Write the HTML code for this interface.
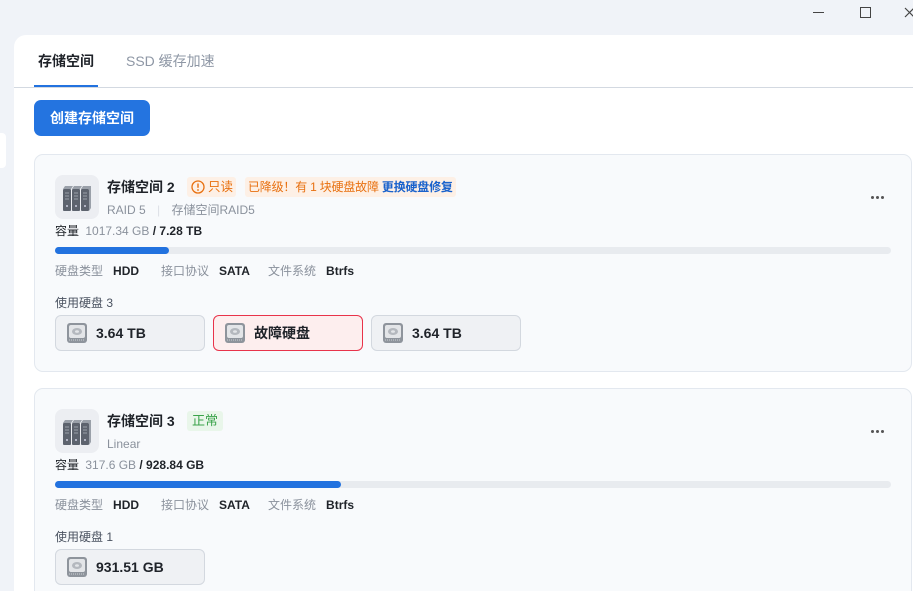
<!DOCTYPE html>
<html><head><meta charset="utf-8"><style>
*{margin:0;padding:0;box-sizing:border-box}
html,body{width:913px;height:591px;overflow:hidden}
body{background:#f0f3f8;font-family:"Liberation Sans","Noto Sans CJK SC",sans-serif;position:relative;color:#1f2329}
.abs{position:absolute}
.panel{left:14px;top:35px;width:899px;height:556px;background:#fff;border-radius:12px 0 0 0;overflow:hidden}
.tab{top:52px;font-size:14px;line-height:18px}
.card{left:34px;width:878px;background:#f8fafc;border:1px solid #e3e8ef;border-radius:9px}
.ico{width:44px;height:44px;background:#eceef2;border-radius:8px}
.t{font-size:14px;line-height:18px;font-weight:bold}
.g{font-size:12px;color:#8a919c;line-height:16px}
.s{font-size:12px;line-height:16px;color:#1f2329}
.bar{left:55px;width:836px;height:7px;background:#e8ebef;border-radius:4px}
.fill{height:7px;background:#2272df;border-radius:4px}
.disk{width:150px;height:36px;background:#eff1f4;border:1px solid #d3d8df;border-radius:6px;font-size:14px;font-weight:bold;line-height:34px;padding-left:40px}
.disk svg{position:absolute;left:10px;top:6px}
.dot{position:absolute;width:3px;height:3px;border-radius:50%;background:#555}
</style></head><body>
<div class="abs" style="left:813px;top:12px;width:11px;height:1px;background:#444"></div>
<div class="abs" style="left:860px;top:7px;width:11px;height:11px;border:1px solid #444"></div>
<svg class="abs" style="left:904px;top:7px" width="10" height="11"><path d="M1 1L10 10M10 1L1 10" stroke="#444" stroke-width="1.2"/></svg>
<div class="abs" style="left:0;top:133px;width:6px;height:35px;background:#fff;border-radius:0 4px 4px 0"></div>
<div class="abs panel"></div>
<div class="abs tab" style="left:38px;font-weight:bold">存储空间</div>
<div class="abs tab" style="left:126px;color:#8e97a5">SSD 缓存加速</div>
<div class="abs" style="left:14px;top:87px;width:900px;height:1px;background:#d3d9e1"></div>
<div class="abs" style="left:34px;top:85px;width:64px;height:2px;background:#2272df"></div>
<div class="abs" style="left:34px;top:100px;width:116px;height:36px;background:#2474e0;border-radius:7px;color:#fff;font-size:14px;font-weight:bold;text-align:center;line-height:36px">创建存储空间</div>

<svg width="0" height="0" style="position:absolute"><defs>
<symbol id="srv" viewBox="0 0 44 44"><g fill="#5d636e"><rect x="8" y="14" width="8" height="22" rx="1"/><rect x="17" y="14" width="8" height="22" rx="1"/><rect x="26" y="14" width="8" height="22" rx="1"/></g><g fill="#9aa0a9"><path d="M10 11h8l-2 3h-8zM19 11h8l-2 3h-8zM28 11h8l-2 3h-8zM34 14l2-3v22l-2 3z"/></g><g stroke="#9aa0a9" stroke-width="1"><path d="M10 18h4M10 21h4M10 24h4M19 18h4M19 21h4M19 24h4M28 18h4M28 21h4M28 24h4"/></g><g fill="#ccd"><circle cx="12" cy="31" r="1"/><circle cx="21" cy="31" r="1"/><circle cx="30" cy="31" r="1"/></g></symbol>
<symbol id="hd" viewBox="0 0 22 22"><rect x="1" y="1" width="20" height="20" rx="3" fill="#8e949c"/><rect x="3" y="3" width="16" height="13" rx="2" fill="#e3e5e8"/><ellipse cx="11" cy="9.5" rx="5" ry="3.5" fill="#b4b8be"/><ellipse cx="11" cy="9.5" rx="2" ry="1.3" fill="#e3e5e8"/><path d="M3 18h16" stroke="#cfd2d6" stroke-dasharray="1 1"/></symbol>
</defs></svg>

<div class="abs card" style="top:154px;height:218px"></div>
<div class="abs ico" style="left:55px;top:175px"><svg width="44" height="44"><use href="#srv"/></svg></div>
<div class="abs t" style="left:107px;top:178px">存储空间 2</div>
<div class="abs" style="left:187px;top:177px;width:21px;height:20px;background:#fdf0e6;border-radius:3px;width:49px"></div>
<svg class="abs" style="left:191px;top:180px" width="14" height="14"><circle cx="7" cy="7" r="6" fill="none" stroke="#e8700f" stroke-width="1.3"/><path d="M7 3.5v4.3" stroke="#e8700f" stroke-width="1.4"/><circle cx="7" cy="10" r=".9" fill="#e8700f"/></svg>
<div class="abs" style="left:208px;top:177px;color:#e8700f;font-size:12.5px;line-height:20px">只读</div>
<div class="abs" style="left:245px;top:177px;height:20px;padding:0 3px;background:#fdf0e6;border-radius:3px;color:#e8700f;font-size:12px;line-height:20px;letter-spacing:-0.2px">已降级！有 1 块硬盘故障 <span style="color:#1a62cc;font-weight:bold">更换硬盘修复</span></div>
<div class="abs g" style="left:107px;top:202px">RAID 5 <span style="color:#dde1e6;margin:0 8px">|</span> 存储空间RAID5</div>
<div class="abs s" style="left:55px;top:223px">容量 <span style="color:#8a919c;margin-left:3px">1017.34 GB</span> <b>/ 7.28 TB</b></div>
<div class="abs bar" style="top:247px"><div class="fill" style="width:114px"></div></div>
<div class="abs s" style="left:55px;top:263px"><span style="color:#8a919c">硬盘类型</span>&nbsp;&nbsp; <b>HDD</b></div>
<div class="abs s" style="left:161px;top:263px"><span style="color:#8a919c">接口协议</span>&nbsp;&nbsp; <b>SATA</b></div>
<div class="abs s" style="left:268px;top:263px"><span style="color:#8a919c">文件系统</span>&nbsp;&nbsp; <b>Btrfs</b></div>
<div class="abs s" style="left:55px;top:295px;color:#4a5260">使用硬盘 3</div>
<div class="abs disk" style="left:55px;top:315px"><svg width="22" height="22"><use href="#hd"/></svg>3.64 TB</div>
<div class="abs disk" style="left:213px;top:315px;background:#fdeeee;border-color:#e8334a"><svg width="22" height="22"><use href="#hd"/></svg>故障硬盘</div>
<div class="abs disk" style="left:371px;top:315px"><svg width="22" height="22"><use href="#hd"/></svg>3.64 TB</div>
<div class="dot" style="left:871px;top:196px"></div><div class="dot" style="left:876px;top:196px"></div><div class="dot" style="left:881px;top:196px"></div>

<div class="abs card" style="top:388px;height:230px"></div>
<div class="abs ico" style="left:55px;top:409px"><svg width="44" height="44"><use href="#srv"/></svg></div>
<div class="abs t" style="left:107px;top:412px">存储空间 3</div>
<div class="abs" style="left:187px;top:411px;height:20px;padding:0 5px;background:#e9f6ea;border-radius:3px;color:#3aa34a;font-size:13px;line-height:20px">正常</div>
<div class="abs g" style="left:107px;top:436px">Linear</div>
<div class="abs s" style="left:55px;top:457px">容量 <span style="color:#8a919c;margin-left:3px">317.6 GB</span> <b>/ 928.84 GB</b></div>
<div class="abs bar" style="top:481px"><div class="fill" style="width:286px"></div></div>
<div class="abs s" style="left:55px;top:497px"><span style="color:#8a919c">硬盘类型</span>&nbsp;&nbsp; <b>HDD</b></div>
<div class="abs s" style="left:161px;top:497px"><span style="color:#8a919c">接口协议</span>&nbsp;&nbsp; <b>SATA</b></div>
<div class="abs s" style="left:268px;top:497px"><span style="color:#8a919c">文件系统</span>&nbsp;&nbsp; <b>Btrfs</b></div>
<div class="abs s" style="left:55px;top:529px;color:#4a5260">使用硬盘 1</div>
<div class="abs disk" style="left:55px;top:549px"><svg width="22" height="22"><use href="#hd"/></svg>931.51 GB</div>
<div class="dot" style="left:871px;top:430px"></div><div class="dot" style="left:876px;top:430px"></div><div class="dot" style="left:881px;top:430px"></div>
</body></html>
